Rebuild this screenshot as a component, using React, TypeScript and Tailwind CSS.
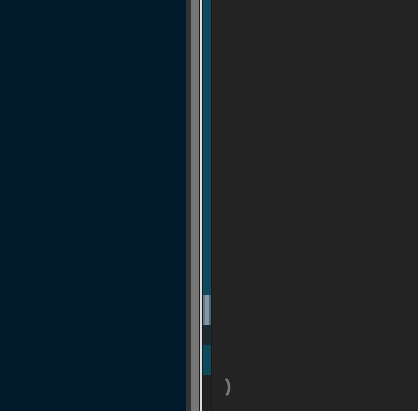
export default function App() {
	return (
		<div className="h-[411px] w-[418px] flex flex-row overflow-hidden">
			<div className="w-[186px] h-full bg-[#001a2c]" />
			<div className="w-[5px] h-full bg-[#333333]" />
			<div className="w-[8px] h-full bg-[#777777]" />
			<div className="w-[1px] h-full bg-[#1a1a1a]" />
			<div className="w-[2px] h-full bg-[#dddddd]" />
			<div className="w-[1px] h-full bg-[#1a1a1a]" />
			<div className="w-[8px] h-full flex flex-col bg-[#0d4a5e]">
				<div className="h-[295px] bg-[#0d4a5e]" />
				<div className="h-[30px] flex flex-row">
					<div className="w-[2px] bg-[#5a7c8c]" />
					<div className="flex-1 bg-[#8a96a2]" />
					<div className="w-[2px] bg-[#3f6678]" />
				</div>
				<div className="h-[20px] bg-[#1d2a30]" />
				<div className="h-[30px] bg-[#0d4a5e]" />
				<div className="flex-1 bg-[#222222]" />
			</div>
			<div className="w-[1px] h-full bg-[#1a1a1a]" />
			<div className="flex-1 h-full bg-[#232323] flex flex-col justify-end pb-[14px] pl-[12px]">
				<svg width="8" height="20" viewBox="0 0 8 20" className="text-[#7a7a7a]">
					<path d="M1.5 2 Q7 10 2 18 L4 18 Q8 10 3.5 2 Z" fill="currentColor" stroke="currentColor" strokeWidth="1" strokeLinejoin="round" />
				</svg>
			</div>
		</div>
	)
}
